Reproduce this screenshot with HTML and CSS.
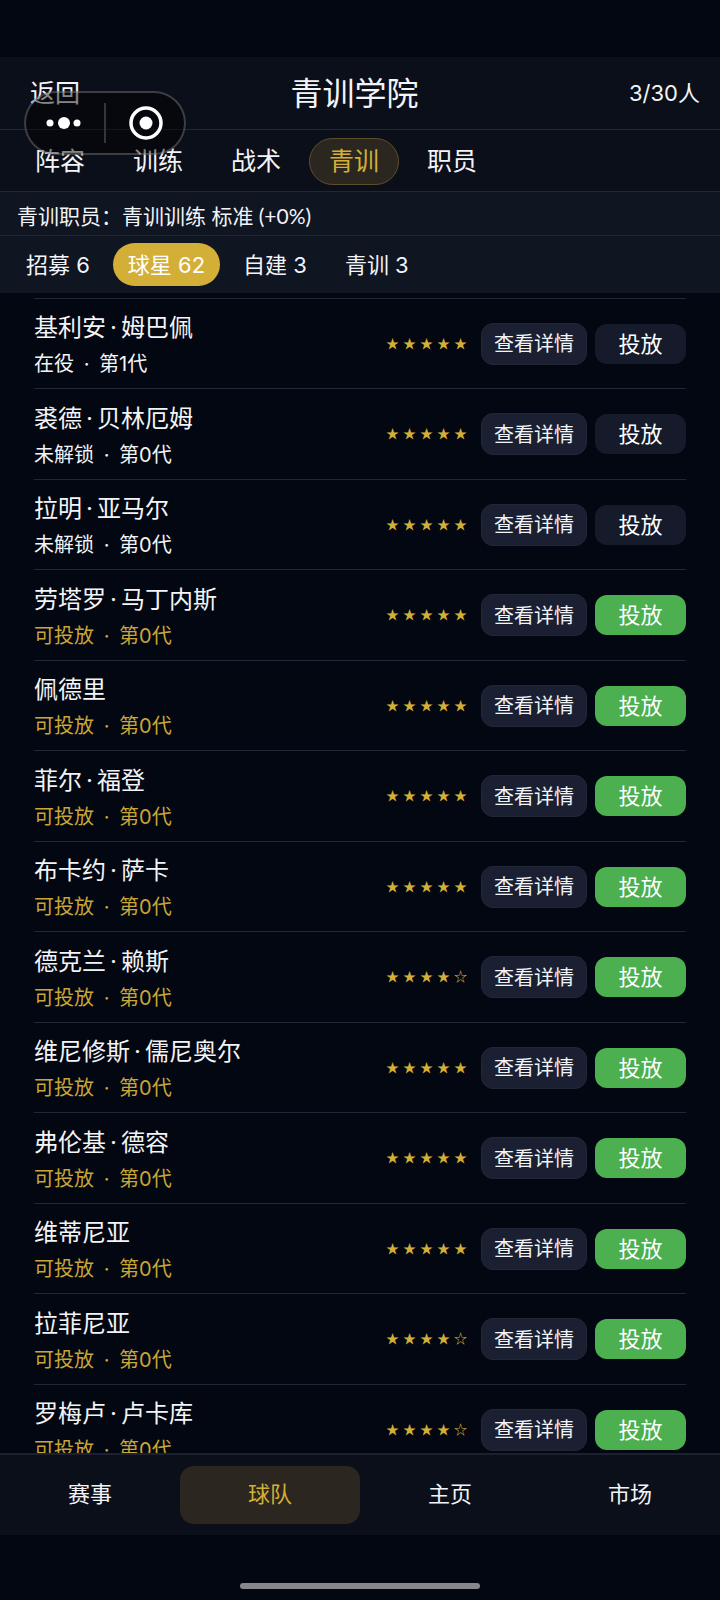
FILE: index.html
```html
<!DOCTYPE html>
<html lang="zh-CN">
  <head>
    <meta charset="UTF-8" />
    <meta name="viewport" content="width=device-width, initial-scale=1.0" />
    <title>青训学院</title>
    <link rel="stylesheet" href="styles.css">
  </head>
  <body>
    <header class="header">
      <button type="button" class="back">返回</button>
      <h1>青训学院</h1>
      <span class="count">3/30人</span>
    </header>

    <!-- Mini program capsule -->
    <div class="capsule">
      <svg width="162" height="64" viewBox="0 0 162 64" aria-hidden="true">
        <circle cx="26" cy="32" r="3.5" fill="#fff" />
        <circle cx="40" cy="32" r="6" fill="#fff" />
        <circle cx="53" cy="32" r="3.5" fill="#fff" />
        <path d="M81 12v40" stroke="#34363c" stroke-width="2" />
        <circle cx="122" cy="32" r="15" fill="none" stroke="#fff" stroke-width="3.5" />
        <circle cx="122" cy="32" r="6.5" fill="#fff" />
      </svg>
    </div>

    <nav class="tabs">
      <button type="button">阵容</button>
      <button type="button">训练</button>
      <button type="button">战术</button>
      <button type="button" class="active">青训</button>
      <button type="button">职员</button>
    </nav>

    <div class="staff">青训职员：青训训练 标准 (+0%)</div>

    <nav class="filters">
      <button type="button">招募 6</button>
      <button type="button" class="active">球星 62</button>
      <button type="button">自建 3</button>
      <button type="button">青训 3</button>
    </nav>

    <main class="list">
      <ul id="players"></ul>
    </main>

    <nav class="bottom-nav">
      <a href="#events">赛事</a>
      <a href="#team" class="active">球队</a>
      <a href="#home">主页</a>
      <a href="#market">市场</a>
    </nav>
    <div class="home-area"><div class="home-bar"></div></div>

    <script src="players.js"></script>
  </body>
</html>
```
FILE: styles.css
```css
* {
  box-sizing: border-box;
}
body {
  margin: 0;
  height: 100vh;
  padding-top: 57px;
  display: flex;
  flex-direction: column;
  background-color: #030711;
  color: #f3f4f7;
  font-family: Inter, "Noto Sans CJK SC", sans-serif;
  font-size: 20px;
}
button {
  font: inherit;
  color: inherit;
  background: none;
  border: none;
  padding: 0;
  white-space: nowrap;
  cursor: pointer;
}
.header {
  display: flex;
  justify-content: space-between;
  align-items: center;
  height: 73px;
  padding: 0 20px 4px 30px;
  background-color: #0b0f1a;
  border-bottom: 1px solid #222735;
}
.header h1 {
  margin: 0;
  font-size: 32px;
  font-weight: 400;
}
.back {
  font-size: 25px;
}
.count {
  font-size: 22px;
}
.capsule {
  position: absolute;
  top: 91px;
  left: 24px;
  width: 162px;
  height: 64px;
  border-radius: 32px;
  background-color: rgba(0, 0, 0, 0.45);
  box-shadow: inset 0 0 0 2px rgba(255, 255, 255, 0.22);
}
.capsule svg {
  display: block;
}
.tabs {
  display: flex;
  align-items: center;
  gap: 8px;
  height: 62px;
  padding: 2px 15px 0;
  background-color: #0b0f1a;
  border-bottom: 1px solid #222735;
}
.tabs button {
  height: 47px;
  padding: 0 19px 5px;
  border: 1px solid transparent;
  border-radius: 24px;
  font-size: 25px;
}
.tabs .active {
  background-color: #2b2720;
  border-color: #5c5029;
  color: #d4af37;
}
.staff {
  height: 44px;
  padding: 0 17px;
  font-family: Lato, "Noto Sans CJK SC", sans-serif;
  font-size: 21px;
  line-height: 48px;
  background-color: #101522;
  border-bottom: 1px solid #222735;
}
.filters {
  display: flex;
  align-items: center;
  gap: 8px;
  height: 57px;
  padding: 0 11px;
  background-color: #101522;
}
.filters button {
  height: 43px;
  padding: 0 15px 4px;
  border-radius: 22px;
  font-size: 22px;
}
.filters .active {
  background-color: #d4af37;
  color: #fff;
}
.list {
  flex: 1;
  min-height: 0;
  overflow: hidden;
  padding: 5px 34px 0;
}
.list ul {
  list-style: none;
  margin: 0;
  padding: 0;
}
.player {
  display: flex;
  align-items: center;
  gap: 8px;
  height: 90px;
  border-top: 1px solid #222735;
}
.player:nth-child(even) {
  height: 91px;
}
.info {
  flex: 1;
  padding-top: 5px;
  line-height: 36px;
}
.name {
  font-size: 24px;
}
.dot {
  padding: 0 4px;
}
.ready {
  color: #c9a636;
}
.stars {
  display: flex;
  margin-right: 4px;
  padding-bottom: 3px;
  color: #d4af37;
  font-family: "Noto Sans CJK SC", sans-serif;
  font-size: 13px;
}
.stars span {
  width: 17px;
  text-align: center;
}
.detail {
  width: 106px;
  height: 42px;
  padding-bottom: 2px;
  border: 1px solid #222738;
  border-radius: 12px;
  background-color: #1a2031;
}
.release {
  width: 91px;
  height: 40px;
  padding-bottom: 4px;
  border-radius: 12px;
  background-color: #4caf50;
  color: #fff;
  font-size: 22px;
}
.release:disabled {
  background-color: #151b2a;
}
.bottom-nav {
  display: flex;
  height: 82px;
  padding: 11px 0;
  background-color: #0b0f1a;
  border-top: 2px solid #1b2130;
}
.bottom-nav a {
  flex: 1;
  line-height: 56px;
  border-radius: 14px;
  color: inherit;
  font-size: 22px;
  text-align: center;
  text-decoration: none;
}
.bottom-nav .active {
  background-color: #2b2720;
  color: #d4af37;
}
.home-area {
  height: 65px;
  padding-top: 48px;
}
.home-bar {
  width: 240px;
  height: 6px;
  margin: 0 auto;
  border-radius: 3px;
  background-color: #85878b;
}
```
FILE: players.js
```js
const players = [
  { name: "基利安·姆巴佩", status: "在役", gen: 1, stars: 5 },
  { name: "裘德·贝林厄姆", status: "未解锁", gen: 0, stars: 5 },
  { name: "拉明·亚马尔", status: "未解锁", gen: 0, stars: 5 },
  { name: "劳塔罗·马丁内斯", status: "可投放", gen: 0, stars: 5 },
  { name: "佩德里", status: "可投放", gen: 0, stars: 5 },
  { name: "菲尔·福登", status: "可投放", gen: 0, stars: 5 },
  { name: "布卡约·萨卡", status: "可投放", gen: 0, stars: 5 },
  { name: "德克兰·赖斯", status: "可投放", gen: 0, stars: 4 },
  { name: "维尼修斯·儒尼奥尔", status: "可投放", gen: 0, stars: 5 },
  { name: "弗伦基·德容", status: "可投放", gen: 0, stars: 5 },
  { name: "维蒂尼亚", status: "可投放", gen: 0, stars: 5 },
  { name: "拉菲尼亚", status: "可投放", gen: 0, stars: 4 },
  { name: "罗梅卢·卢卡库", status: "可投放", gen: 0, stars: 4 },
];

const list = document.getElementById("players");

players.forEach(function (p) {
  const ready = p.status === "可投放";
  const name = p.name.replace("·", '<span class="dot">·</span>');
  let stars = "";
  for (let i = 0; i < 5; i++) {
    stars += "<span>" + (i < p.stars ? "★" : "☆") + "</span>";
  }

  const row = document.createElement("li");
  row.className = "player";
  row.innerHTML = `
    <div class="info">
      <div class="name">${name}</div>
      <div class="${ready ? "ready" : "status"}">${p.status} <span class="dot">·</span> 第${p.gen}代</div>
    </div>
    <div class="stars">${stars}</div>
    <button type="button" class="detail">查看详情</button>
    <button type="button" class="release" ${ready ? "" : "disabled"}>投放</button>`;
  list.appendChild(row);
});
```
